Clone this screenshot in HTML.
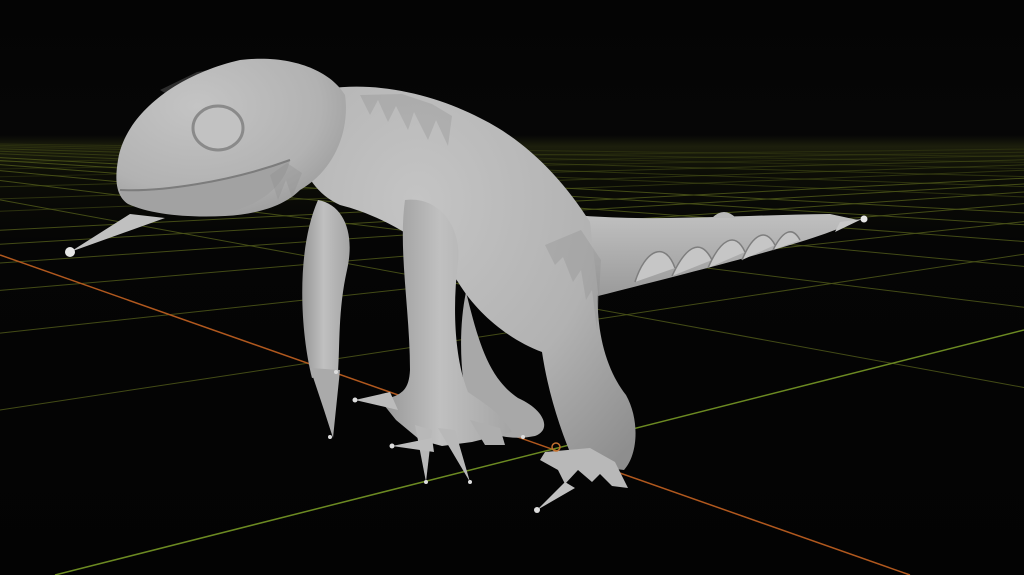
<!DOCTYPE html>
<html><head><meta charset="utf-8"><style>
html,body{margin:0;padding:0;background:#040404;width:1024px;height:575px;overflow:hidden}
svg{display:block;overflow:hidden}
</style></head><body>
<svg width="1024" height="575" viewBox="0 0 1024 575" xmlns="http://www.w3.org/2000/svg">
<defs>
<linearGradient id="bg" x1="0" y1="0" x2="0" y2="1">
<stop offset="0" stop-color="#040404"/><stop offset="0.235" stop-color="#060606"/>
<stop offset="0.255" stop-color="#1c1e0c"/><stop offset="0.3" stop-color="#0c0d06"/>
<stop offset="0.42" stop-color="#050505"/><stop offset="1" stop-color="#030303"/>
</linearGradient>
<radialGradient id="skin" cx="0.35" cy="0.3" r="0.9">
<stop offset="0" stop-color="#c4c4c4"/><stop offset="0.6" stop-color="#b2b2b2"/><stop offset="1" stop-color="#8e8e8e"/>
</radialGradient>
<linearGradient id="leg" x1="0" y1="0" x2="1" y2="0">
<stop offset="0" stop-color="#959595"/><stop offset="0.45" stop-color="#c0c0c0"/><stop offset="1" stop-color="#a4a4a4"/>
</linearGradient>
<linearGradient id="tail" x1="0" y1="0" x2="0" y2="1">
<stop offset="0" stop-color="#c0c0c0"/><stop offset="1" stop-color="#9a9a9a"/>
</linearGradient>
</defs>
<rect width="1024" height="575" fill="url(#bg)"/>
<g stroke="#4a5318" stroke-width="1" fill="none">
<g stroke-opacity="0.9">
<line x1="0" y1="199.9" x2="1024" y2="387.5"/>
<line x1="0" y1="180.5" x2="1024" y2="307.3"/>
<line x1="0" y1="170.6" x2="1024" y2="266.4"/>
<line x1="0" y1="164.6" x2="1024" y2="241.5"/>
<line x1="0" y1="160.5" x2="1024" y2="224.8"/>
<line x1="0" y1="157.6" x2="1024" y2="212.9"/>
<line x1="0" y1="410" x2="1024" y2="254.2"/>
<line x1="0" y1="333.1" x2="1024" y2="221.6"/>
<line x1="0" y1="290.4" x2="1024" y2="203.6"/>
<line x1="0" y1="263" x2="1024" y2="192"/>
<line x1="0" y1="244.2" x2="1024" y2="184"/>
<line x1="0" y1="230.3" x2="1024" y2="178.2"/>
</g>
<g stroke-opacity="0.55">
<line x1="0" y1="153.8" x2="1024" y2="196.9"/>
<line x1="0" y1="151.3" x2="1024" y2="186.6"/>
<line x1="0" y1="148.9" x2="1024" y2="176.6"/>
<line x1="0" y1="211.3" x2="1024" y2="170.2"/>
<line x1="0" y1="198.9" x2="1024" y2="164.9"/>
<line x1="0" y1="186.7" x2="1024" y2="159.8"/>
</g>
<g stroke-opacity="0.35">
<line x1="0" y1="146.9" x2="1024" y2="168.6"/>
<line x1="0" y1="145.4" x2="1024" y2="162.4"/>
<line x1="0" y1="144" x2="1024" y2="156.7"/>
<line x1="0" y1="176.7" x2="1024" y2="155.5"/>
<line x1="0" y1="168.9" x2="1024" y2="152.2"/>
<line x1="0" y1="161.6" x2="1024" y2="149.1"/>
</g>
</g>
<line x1="0" y1="255" x2="910" y2="575" stroke="#b0581e" stroke-width="1.5"/>
<line x1="55" y1="575" x2="1024" y2="330" stroke="#6c8a22" stroke-width="1.5"/>

<path d="M318 200 C345 205 355 235 347 270 C338 310 340 345 338 372 L312 378 C300 330 296 250 318 200 Z" fill="url(#leg)"/>
<path d="M310 368 L340 370 L333 438 L324 410 Z" fill="#aaaaaa"/>
<circle cx="330" cy="437" r="2" fill="#ddd"/><circle cx="336" cy="372" r="2" fill="#ddd"/>

<path d="M466 292 C478 340 488 378 518 398 C545 410 552 430 535 436 C505 442 480 432 470 416 C460 380 458 330 466 292 Z" fill="#a8a8a8"/>

<path d="M575 215 C650 222 740 215 830 214 L858 220 C820 240 720 265 598 296 Z" fill="url(#tail)"/>
<g fill="#c6c6c6" stroke="#7e7e7e" stroke-width="1.5">
<path d="M635 282 C645 250 665 240 675 268"/><path d="M672 276 C685 248 700 236 712 260"/><path d="M708 268 C720 240 735 230 745 252"/><path d="M742 260 C752 236 765 226 775 245"/><path d="M773 250 C782 232 792 225 800 240"/>
</g>
<path d="M712 218 q12 -12 24 0 z" fill="#b8b8b8"/>

<path d="M300 95 C360 76 430 92 480 118 C525 140 562 178 590 222 L598 292 C596 330 606 370 626 395 C640 420 638 455 624 470 L575 464 C560 430 548 392 542 352 C510 340 478 315 458 282 C432 242 380 215 340 205 C318 195 303 175 300 150 Z" fill="url(#skin)"/>
<g fill="#8a8a8a" opacity="0.3">
<path d="M360 95 l10 20 l8 -15 l10 22 l8 -16 l12 24 l6 -18 l14 28 l8 -20 l12 26 l4 -30 l-20 -12 l-30 -10 Z"/>
<path d="M545 245 l10 20 l8 -8 l10 25 l8 -12 l5 30 l6 -10 l5 40 l4 -70 l-20 -30 Z"/>
<path d="M160 90 l10 6 l12 -10 l10 8 l14 -12 l14 6 l12 -10 l20 4 l15 -10 l20 8 l-40 -16 l-50 8 Z"/>
</g>

<path d="M405 200 C440 196 462 228 458 262 C452 310 455 360 468 392 C482 402 500 412 512 432 L472 442 L442 446 L420 440 L396 420 L380 400 C402 396 409 390 410 370 C410 310 398 250 405 200 Z" fill="url(#leg)"/>
<path d="M355 400 L390 392 L398 410 Z" fill="#bcbcbc"/>
<path d="M415 425 L432 430 L426 482 Z" fill="#b8b8b8"/>
<path d="M438 428 L455 430 L470 482 Z" fill="#b8b8b8"/>
<path d="M392 446 L432 438 L434 452 Z" fill="#bcbcbc"/>
<path d="M470 420 L500 428 L505 445 L485 445 Z" fill="#aeaeae"/>
<circle cx="355" cy="400" r="2.5" fill="#ddd"/><circle cx="392" cy="446" r="2.5" fill="#ddd"/>
<circle cx="426" cy="482" r="2" fill="#ddd"/><circle cx="470" cy="482" r="2" fill="#ddd"/><circle cx="523" cy="437" r="2" fill="#ddd"/>

<path d="M545 452 L590 448 L615 462 L628 488 L612 486 L600 474 L592 482 L578 470 L565 484 L558 470 L540 460 Z" fill="#b8b8b8"/>
<path d="M537 510 L565 482 L575 488 Z" fill="#c0c0c0"/><circle cx="537" cy="510" r="3" fill="#ddd"/>
<circle cx="556" cy="447" r="4" fill="none" stroke="#c07030" stroke-width="1.5"/>

<path d="M118 160 C125 115 175 75 240 60 C290 54 330 70 345 95 C350 130 335 170 300 190 C285 205 260 214 225 216 C185 218 150 214 128 204 C115 195 115 178 118 160 Z" fill="url(#skin)"/>
<path d="M120 190 C160 192 230 182 290 160 C285 185 262 205 225 213 C180 218 140 212 124 200 Z" fill="#a2a2a2"/>
<path d="M120 190 C160 192 230 182 290 160" fill="none" stroke="#7c7c7c" stroke-width="2"/>
<ellipse cx="218" cy="128" rx="25" ry="22" fill="#c2c2c2" stroke="#8a8a8a" stroke-width="3"/>
<path d="M270 175 l8 25 l8 -20 l6 18 l10 -25 l-15 -10 Z" fill="#8e8e8e" opacity="0.35"/>

<path d="M70 252 L130 214 L165 218 Z" fill="#c0c0c0"/>
<circle cx="70" cy="252" r="5" fill="#e6e6e6"/>
<path d="M862 219 L835 232 L840 222 Z" fill="#c8c8c8"/>
<circle cx="864" cy="219" r="3.5" fill="#e6e6e6"/>
</svg>
</body></html>
